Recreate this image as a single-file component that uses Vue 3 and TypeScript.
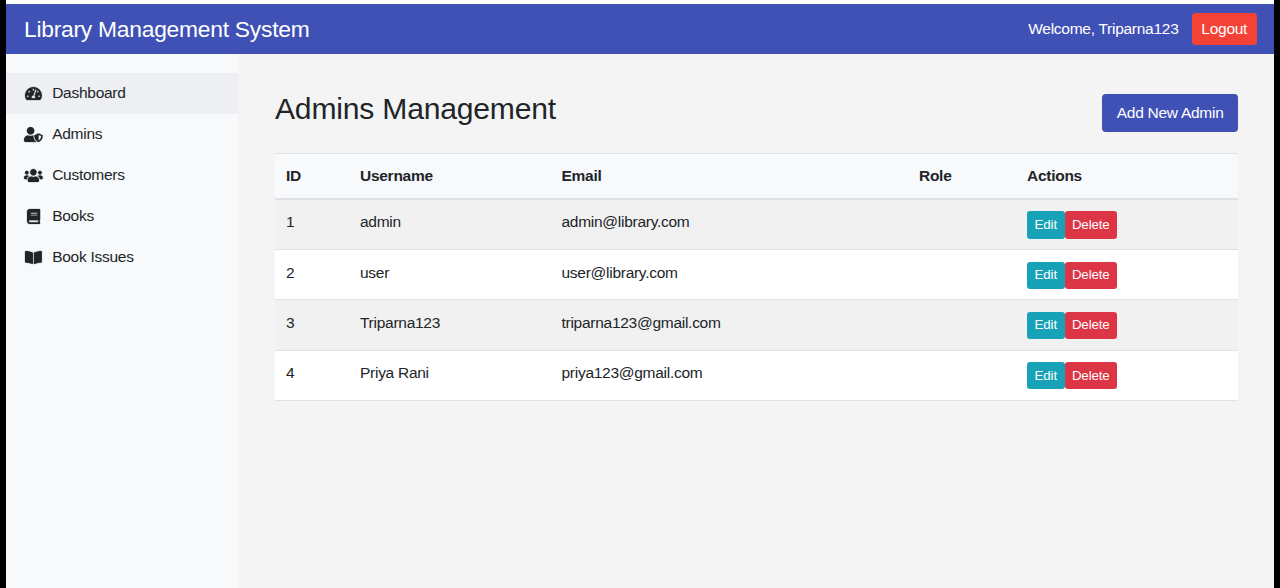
<script setup lang="ts">
interface NavItem {
  label: string
  width: number
  path: string
}

interface Admin {
  id: number
  username: string
  email: string
  role: string
}

const navItems: NavItem[] = [
  {
    label: 'Dashboard',
    width: 576,
    path: 'M288 32C128.94 32 0 160.94 0 320c0 52.8 14.25 102.26 39.06 144.8 5.61 9.62 16.3 15.2 27.44 15.2h443c11.14 0 21.83-5.58 27.44-15.2C561.75 422.26 576 372.8 576 320c0-159.06-128.94-288-288-288zm0 64c14.71 0 26.58 10.13 30.32 23.65-1.11 2.26-2.64 4.23-3.45 6.67l-9.22 27.67c-5.13 3.49-10.97 6.01-17.64 6.01-17.67 0-32-14.33-32-32S270.33 96 288 96zM96 384c-17.67 0-32-14.33-32-32s14.33-32 32-32 32 14.33 32 32-14.33 32-32 32zm48-160c-17.67 0-32-14.33-32-32s14.33-32 32-32 32 14.33 32 32-14.33 32-32 32zm246.77-72.41l-61.33 184C343.13 347.33 352 364.54 352 384c0 11.72-3.38 22.55-8.88 32H232.88c-5.5-9.45-8.88-20.28-8.88-32 0-33.94 26.5-61.43 59.9-63.59l61.34-184.01c4.17-12.56 17.73-19.45 30.36-15.17 12.57 4.19 19.35 17.79 15.17 30.36zm14.66 57.2l15.52-46.55c3.47-1.29 7.13-2.23 11.05-2.23 17.67 0 32 14.33 32 32s-14.33 32-32 32c-11.38-.01-20.89-6.28-26.57-15.22zM480 384c-17.67 0-32-14.33-32-32s14.33-32 32-32 32 14.33 32 32-14.33 32-32 32z',
  },
  {
    label: 'Admins',
    width: 640,
    path: 'M622.3 271.1l-115.2-45c-4.1-1.6-12.6-3.7-22.2 0l-115.2 45c-10.7 4.2-17.7 14-17.7 24.9 0 111.6 68.7 188.8 132.9 213.9 9.6 3.7 18 1.6 22.2 0C558.4 489.9 640 420.5 640 296c0-10.9-7-20.7-17.7-24.9zM496 462.4V273.3l95.5 37.3c-5.6 87.1-60.9 135.4-95.5 151.8zM224 256c70.7 0 128-57.3 128-128S294.7 0 224 0 96 57.3 96 128s57.3 128 128 128zm96 40c0-2.5.8-4.8 1.1-7.2-2.5-.1-4.9-.8-7.5-.8h-16.7c-22.2 10.2-46.9 16-72.9 16s-50.6-5.8-72.9-16h-16.7C60.2 288 0 348.2 0 422.4V464c0 26.5 21.5 48 48 48h352c6.8 0 13.3-1.5 19.2-4-54-42.9-99.2-116.7-99.2-212z',
  },
  {
    label: 'Customers',
    width: 640,
    path: 'M96 224c35.3 0 64-28.7 64-64s-28.7-64-64-64-64 28.7-64 64 28.7 64 64 64zm448 0c35.3 0 64-28.7 64-64s-28.7-64-64-64-64 28.7-64 64 28.7 64 64 64zm32 32h-64c-17.6 0-33.5 7.1-45.1 18.6 40.3 22.1 68.9 62 75.1 109.4h66c17.7 0 32-14.3 32-32v-32c0-35.3-28.7-64-64-64zm-256 0c61.9 0 112-50.1 112-112S381.9 32 320 32 208 82.1 208 144s50.1 112 112 112zm76.8 32h-8.3c-20.8 10-43.9 16-68.5 16s-47.6-6-68.5-16h-8.3C179.6 288 128 339.6 128 403.2V432c0 26.5 21.5 48 48 48h288c26.5 0 48-21.5 48-48v-28.8c0-63.6-51.6-115.2-115.2-115.2zm-223.7-13.4C161.5 263.1 145.6 256 128 256H64c-35.3 0-64 28.7-64 64v32c0 17.7 14.3 32 32 32h65.9c6.3-47.4 34.9-87.3 75.2-109.4z',
  },
  {
    label: 'Books',
    width: 448,
    path: 'M448 360V24c0-13.3-10.7-24-24-24H96C43 0 0 43 0 96v320c0 53 43 96 96 96h328c13.3 0 24-10.7 24-24v-16c0-7.5-3.5-14.3-8.9-18.7-4.2-15.4-4.2-59.3 0-74.7 5.4-4.3 8.9-11.1 8.9-18.6zM128 134c0-3.3 2.7-6 6-6h212c3.3 0 6 2.7 6 6v20c0 3.3-2.7 6-6 6H134c-3.3 0-6-2.7-6-6v-20zm0 64c0-3.3 2.7-6 6-6h212c3.3 0 6 2.7 6 6v20c0 3.3-2.7 6-6 6H134c-3.3 0-6-2.7-6-6v-20zm253.4 250H96c-17.7 0-32-14.3-32-32 0-17.6 14.4-32 32-32h285.4c-1.9 17.1-1.9 46.9 0 64z',
  },
  {
    label: 'Book Issues',
    width: 576,
    path: 'M542.22 32.05c-54.8 3.11-163.72 14.43-230.96 55.59-4.64 2.84-7.27 7.89-7.27 13.17v363.87c0 11.55 12.63 18.85 23.28 13.49 69.18-34.82 169.23-44.32 218.7-46.92 16.89-.89 30.02-14.43 30.02-30.66V62.75c.01-17.71-15.35-31.74-33.77-30.7zM264.73 87.64C197.5 46.48 88.58 35.17 33.78 32.05 15.36 31.01 0 45.04 0 62.75V400.6c0 16.24 13.13 29.78 30.02 30.66 49.49 2.6 149.59 12.11 218.77 46.95 10.62 5.35 23.21-1.94 23.21-13.46V100.63c0-5.29-2.62-10.14-7.27-12.99z',
  },
]

const activeItem = 'Dashboard'

const admins: Admin[] = [
  { id: 1, username: 'admin', email: 'admin@library.com', role: '' },
  { id: 2, username: 'user', email: 'user@library.com', role: '' },
  { id: 3, username: 'Triparna123', email: 'triparna123@gmail.com', role: '' },
  { id: 4, username: 'Priya Rani', email: 'priya123@gmail.com', role: '' },
]
</script>

<template>
  <div class="frame">
    <div class="page">
      <header class="navbar">
        <div class="brand">Library Management System</div>
        <div class="account">
          <span class="welcome">Welcome, Triparna123</span>
          <button class="logout" type="button">Logout</button>
        </div>
      </header>
      <div class="body">
        <nav class="sidebar">
          <a
            v-for="item in navItems"
            :key="item.label"
            class="nav-link"
            :class="{ active: item.label === activeItem }"
          >
            <span class="nav-icon">
              <svg :viewBox="`0 0 ${item.width} 512`" aria-hidden="true">
                <path :d="item.path" />
              </svg>
            </span>
            <span class="nav-text">{{ item.label }}</span>
          </a>
        </nav>
        <main class="content">
          <div class="heading">
            <h1>Admins Management</h1>
            <button class="add" type="button">Add New Admin</button>
          </div>
          <table class="table">
            <colgroup>
              <col class="c-id" />
              <col class="c-user" />
              <col class="c-email" />
              <col class="c-role" />
              <col />
            </colgroup>
            <thead>
              <tr>
                <th>ID</th>
                <th>Username</th>
                <th>Email</th>
                <th>Role</th>
                <th>Actions</th>
              </tr>
            </thead>
            <tbody>
              <tr v-for="admin in admins" :key="admin.id">
                <td>{{ admin.id }}</td>
                <td>{{ admin.username }}</td>
                <td>{{ admin.email }}</td>
                <td>{{ admin.role }}</td>
                <td>
                  <div class="actions">
                    <button class="edit" type="button">Edit</button>
                    <button class="delete" type="button">Delete</button>
                  </div>
                </td>
              </tr>
            </tbody>
          </table>
        </main>
      </div>
    </div>
  </div>
</template>

<style>
body {
  margin: 0;
  background: #000;
}
</style>

<style scoped>
* {
  box-sizing: border-box;
}

.frame {
  height: 588px;
  padding: 0 6px 0 5.5px;
  overflow: hidden;
  background: #000;
  color: #212529;
  font-family: 'Liberation Sans', Arial, sans-serif;
  font-size: 15.5px;
  letter-spacing: -0.27px;
  line-height: 22.4px;
}

.page {
  display: flex;
  flex-direction: column;
  height: 100%;
  padding-top: 4px;
  background: #fff;
}

.navbar {
  display: flex;
  align-items: center;
  justify-content: space-between;
  height: 50.4px;
  flex: none;
  padding: 0 17.5px 0 18.5px;
  background: #3f51b5;
  color: #fff;
}

.brand {
  padding-top: 1px;
  font-size: 22.8px;
  letter-spacing: -0.24px;
}

.account {
  display: flex;
  align-items: center;
  gap: 13.5px;
}

button {
  display: block;
  margin: 0;
  padding: 0;
  border: 0;
  border-radius: 3.7px;
  color: #fff;
  font-family: inherit;
  font-size: inherit;
  letter-spacing: inherit;
  line-height: inherit;
  text-align: center;
}

.logout {
  width: 64.5px;
  height: 32px;
  background: #f44336;
}

.body {
  display: flex;
  flex: 1;
  background: #f4f4f4;
}

.sidebar {
  width: 232.5px;
  flex: none;
  padding-top: 18.6px;
  background: #f8f9fa;
}

.nav-link {
  display: flex;
  align-items: center;
  height: 40.85px;
  padding-left: 18.7px;
}

.nav-link.active {
  background: #eeeff2;
}

.nav-icon {
  display: flex;
  justify-content: center;
  width: 18.7px;
  margin-right: 9.3px;
  padding-top: 0.6px;
}

.nav-icon svg {
  flex: none;
  height: 15px;
  overflow: visible;
  fill: #212529;
  stroke: #212529;
  stroke-width: 8;
}

.content {
  flex: 1;
  padding: 37px 35.9px 0 37px;
}

.heading {
  display: flex;
  align-items: flex-start;
  justify-content: space-between;
  height: 61.6px;
}

h1 {
  margin: 0;
  font-size: 30.1px;
  font-weight: 400;
  letter-spacing: -0.2px;
  line-height: 36px;
}

.add {
  width: 136px;
  height: 37.3px;
  margin-top: 3px;
  background: #3f51b5;
}

.table {
  width: 100%;
  border-collapse: separate;
  border-spacing: 0;
  table-layout: fixed;
}

.c-id {
  width: 74px;
}

.c-user {
  width: 201.5px;
}

.c-email {
  width: 357.5px;
}

.c-role {
  width: 108px;
}

th {
  height: 47px;
  padding: 0 11px;
  border-top: 1px solid #dee2e6;
  border-bottom: 2px solid #dee2e6;
  background: #f8f9fa;
  font-weight: 700;
  text-align: left;
}

td {
  height: 50.25px;
  padding: 11.4px 11px 0;
  border-bottom: 1px solid #dee2e6;
  background: #fff;
  vertical-align: top;
}

tbody tr:nth-child(odd) td {
  background: #f1f1f1;
}

.actions {
  display: flex;
  font-size: 13.3px;
  letter-spacing: -0.12px;
}

.actions button {
  height: 27.3px;
  border-radius: 3px;
}

.edit {
  width: 37.5px;
  background: #17a2b8;
}

.delete {
  width: 52.5px;
  background: #dc3545;
}
</style>
